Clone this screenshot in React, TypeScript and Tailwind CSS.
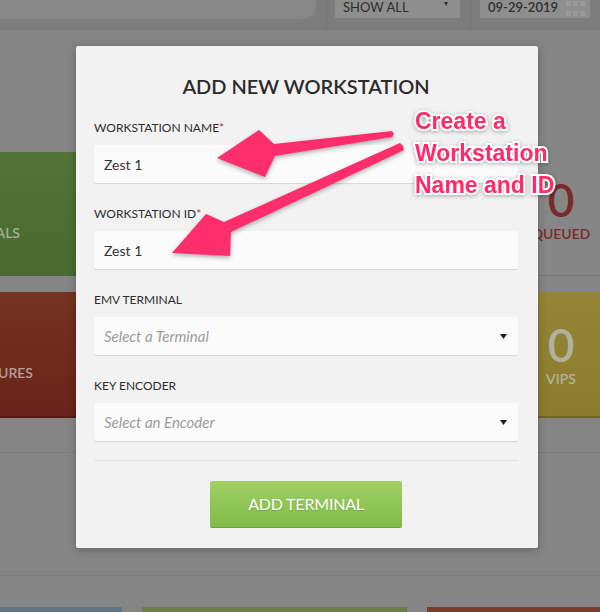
const fields = [
  { label: "WORKSTATION NAME", required: true, value: "Zest 1" },
  { label: "WORKSTATION ID", required: true, value: "Zest 1" },
  { label: "EMV TERMINAL", placeholder: "Select a Terminal" },
  { label: "KEY ENCODER", placeholder: "Select an Encoder" },
];

const Caret = () => (
  <svg width="7" height="5" viewBox="0 0 7 5" className="shrink-0">
    <path d="M0 0h7L3.5 5z" fill="#1f1f1f" />
  </svg>
);

const Backdrop = () => (
  <div>
    <div className="flex h-[30px] items-start border-b border-[#787878] bg-[#7d7d7d] text-[13px] leading-[12px] text-[#2e2e2e]">
      <div className="h-[19px] w-[316px] rounded-br-[14px] bg-[#878787]" />
      <div className="ml-[10px] h-full w-px bg-[#757575]" />
      <div className="ml-[8px] flex h-[18px] w-[125px] justify-between bg-[#8e8e8e] pl-2 pr-3 pt-[1px]">
        <span>SHOW ALL</span>
        <span className="text-[8px] leading-[4px]">▾</span>
      </div>
      <div className="ml-[10px] h-full w-px bg-[#757575]" />
      <div className="ml-[9px] flex h-[18px] w-[110px] justify-between bg-[#8e8e8e] pl-2 pr-[5px] pt-[1px] font-semibold">
        <span>09-29-2019</span>
        <div className="grid grid-cols-3 gap-[2px]">
          {[0, 1, 2, 3, 4, 5].map((i) => (
            <div key={i} className="h-[5px] w-[5px] bg-[#9a9a9a]" />
          ))}
        </div>
      </div>
    </div>

    <div className="mt-[122px] flex h-[124px] justify-between">
      <div className="flex w-[140px] items-end bg-gradient-to-b from-[#527436] to-[#4a6a2f] pb-[33px] text-[14px] font-semibold text-[#a4ae98]">
        <div className="flex w-[20px] justify-end">
          <span className="whitespace-nowrap">TERMINALS</span>
        </div>
      </div>
      <div className="flex w-[78px] flex-col items-center border-b border-[#7a7a7a] bg-[#868686] pt-[25px] text-[#7a2a2a]">
        <span className="text-[46px] leading-[46px] font-semibold">0</span>
        <span className="text-[14px] font-semibold">QUEUED</span>
      </div>
    </div>

    <div className="mt-[16px] flex h-[126px] justify-between">
      <div className="flex w-[140px] items-end border-b-2 border-[#561a12] bg-gradient-to-b from-[#753322] to-[#69231a] pb-[33px] text-[14px] font-semibold text-[#b69d96]">
        <div className="flex w-[33px] justify-end">
          <span className="whitespace-nowrap">FAILURES</span>
        </div>
      </div>
      <div className="flex w-[78px] flex-col items-center border-b-2 border-[#6f6524] bg-gradient-to-b from-[#948634] to-[#8a7c2c] pt-[30px] text-[#b3b0a2]">
        <span className="text-[46px] leading-[46px] font-semibold">0</span>
        <span className="text-[14px] font-semibold">VIPS</span>
      </div>
    </div>

    <div className="mt-[34px] h-px bg-[#7a7a7a]" />
    <div className="mt-[122px] h-px bg-[#7a7a7a]" />
    <div className="mt-[31px] flex h-[10px] gap-[20px]">
      <div className="w-[122px] bg-[#5f7480]" />
      <div className="w-[265px] bg-[#6c7d4c]" />
      <div className="flex-1 bg-[#7a3c2c]" />
    </div>
  </div>
);

const Modal = () => (
  <div className="absolute left-[76px] top-[46px] h-[502px] w-[462px] rounded-[2px] bg-[#f2f2f2] pl-[18px] pr-[20px] pt-[26px] pb-[20px] shadow-[0_2px_8px_rgba(0,0,0,0.25)]">
    <h2 className="mb-[20px] text-center text-[20px] leading-[28px] font-semibold text-[#2b2b2b]">
      ADD NEW WORKSTATION
    </h2>
    {fields.map((f, i) => (
      <div key={f.label} className={i < fields.length - 1 ? "mb-[23px]" : ""}>
        <div className="mb-[9px] text-[12px] leading-[16px] text-[#2e2e2e]">
          {f.label}
          {f.required && <span className="text-[#b8322f]">*</span>}
        </div>
        <div className="flex h-[38px] items-center justify-between rounded-[2px] bg-[#fbfbfb] pl-[10px] pr-[11px] text-[14px] shadow-[0_1px_1px_rgba(0,0,0,0.12)]">
          {f.value ? (
            <span className="text-[#333]">{f.value}</span>
          ) : (
            <>
              <span className="text-[15px] italic text-[#9c9c9c]">{f.placeholder}</span>
              <Caret />
            </>
          )}
        </div>
      </div>
    ))}
    <div className="mt-[19px] h-px bg-[#e0e0e0]" />
    <div className="mt-[20px] flex justify-center">
      <button className="h-[47px] w-[192px] rounded-[2px] border-b border-[#6d9f3a] bg-gradient-to-b from-[#a1d065] to-[#7fbb46] text-[16px] tracking-[-0.2px] text-white [text-shadow:0_1px_1px_rgba(0,0,0,0.15)]">
        ADD TERMINAL
      </button>
    </div>
  </div>
);

const Annotation = () => (
  <>
    <svg
      width="600"
      height="612"
      className="pointer-events-none absolute left-0 top-0 [filter:drop-shadow(0_2px_2px_rgba(0,0,0,0.3))]"
    >
      <polygon
        points="217,158 259,130 274,144 392,131 394,134 392,137 275,156 265,177"
        fill="#fe2d6c"
      />
      <polygon
        points="172,253 206,214 224,222 400,143 403,146 404,150 231,232 230,256"
        fill="#fe2d6c"
      />
    </svg>
    <div className="absolute left-[415px] top-[105px] font-['Liberation_Sans',Arial,sans-serif] text-[23px] leading-[32px] font-bold text-[#fe2a69] [paint-order:stroke_fill] [-webkit-text-stroke:4px_white] [filter:drop-shadow(0_1px_2px_rgba(0,0,0,0.3))]">
      <div>Create a</div>
      <div>Workstation</div>
      <div>Name and ID</div>
    </div>
  </>
);

export default function App() {
  return (
    <div className="relative h-[612px] w-[600px] overflow-hidden bg-[#858585] font-['Lato',sans-serif]">
      <Backdrop />
      <Modal />
      <Annotation />
    </div>
  );
}
